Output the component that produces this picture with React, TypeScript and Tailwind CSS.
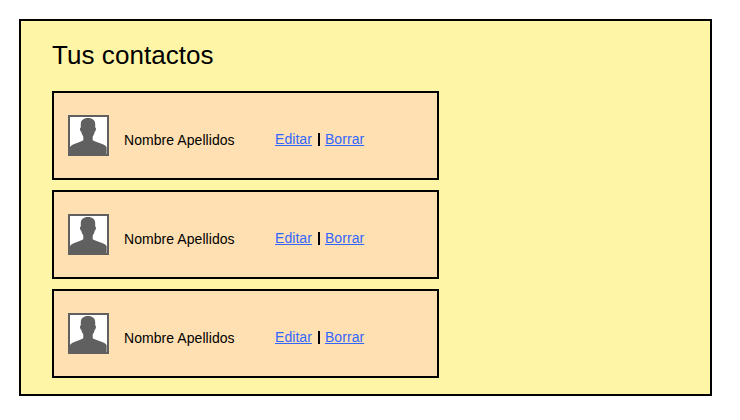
function Avatar() {
  return (
    <svg className="block h-[41px] w-[41px] shrink-0" viewBox="0 0 41 41">
      <rect x="1" y="1" width="39" height="39" fill="#fff" stroke="#606060" strokeWidth="2" />
      <path
        d="M20 3C15.500 3 12.800 5.500 12.800 9V12.500C11.600 12.500 11.800 16 13.300 16.800C13.700 19 14.600 20.500 15.300 21.500V25.200C12 27.500 4.500 28.500 2 32V39.500H38.500V32C36.500 28.500 28 27.500 24.700 25.200V21.500C25.600 20.500 26.300 19 26.700 16.800C28.200 16 28.400 12.500 27.200 12.500V9C27.200 5.500 24.500 3 20 3Z"
        fill="#606060"
      />
      <path d="M38.500 32V39" stroke="#999" strokeWidth="1" />
    </svg>
  );
}

function Contact() {
  return (
    <li className="flex h-[89px] w-[387px] items-start border-2 border-black bg-[#ffe0b2] pl-[14px] pt-[22px] text-sm leading-4">
      <Avatar />
      <span className="ml-[15px] mt-[17px] w-[151px] tracking-[0.06px]">Nombre Apellidos</span>
      <span className="mt-4 flex tracking-[0.06px]">
        <a className="text-[#3366ff] underline">Editar</a>
        <span className="ml-[6px] mt-[2px] h-[13px] w-[2px] bg-black" />
        <a className="ml-[5px] text-[#3366ff] underline">Borrar</a>
      </span>
    </li>
  );
}

export default function App() {
  return (
    <div className="h-[420px] w-[740px] bg-white pl-[19px] pt-[19px] font-['Liberation_Sans',Arial,sans-serif] text-black">
      <main className="h-[377px] w-[693px] border-2 border-black bg-[#fff5a6] pl-[31px] pt-[18px]">
        <h1 className="h-[52px] text-[26px] leading-[32px] tracking-[0.06px]">Tus contactos</h1>
        <ul className="flex flex-col gap-[10px]">
          <Contact />
          <Contact />
          <Contact />
        </ul>
      </main>
    </div>
  );
}
